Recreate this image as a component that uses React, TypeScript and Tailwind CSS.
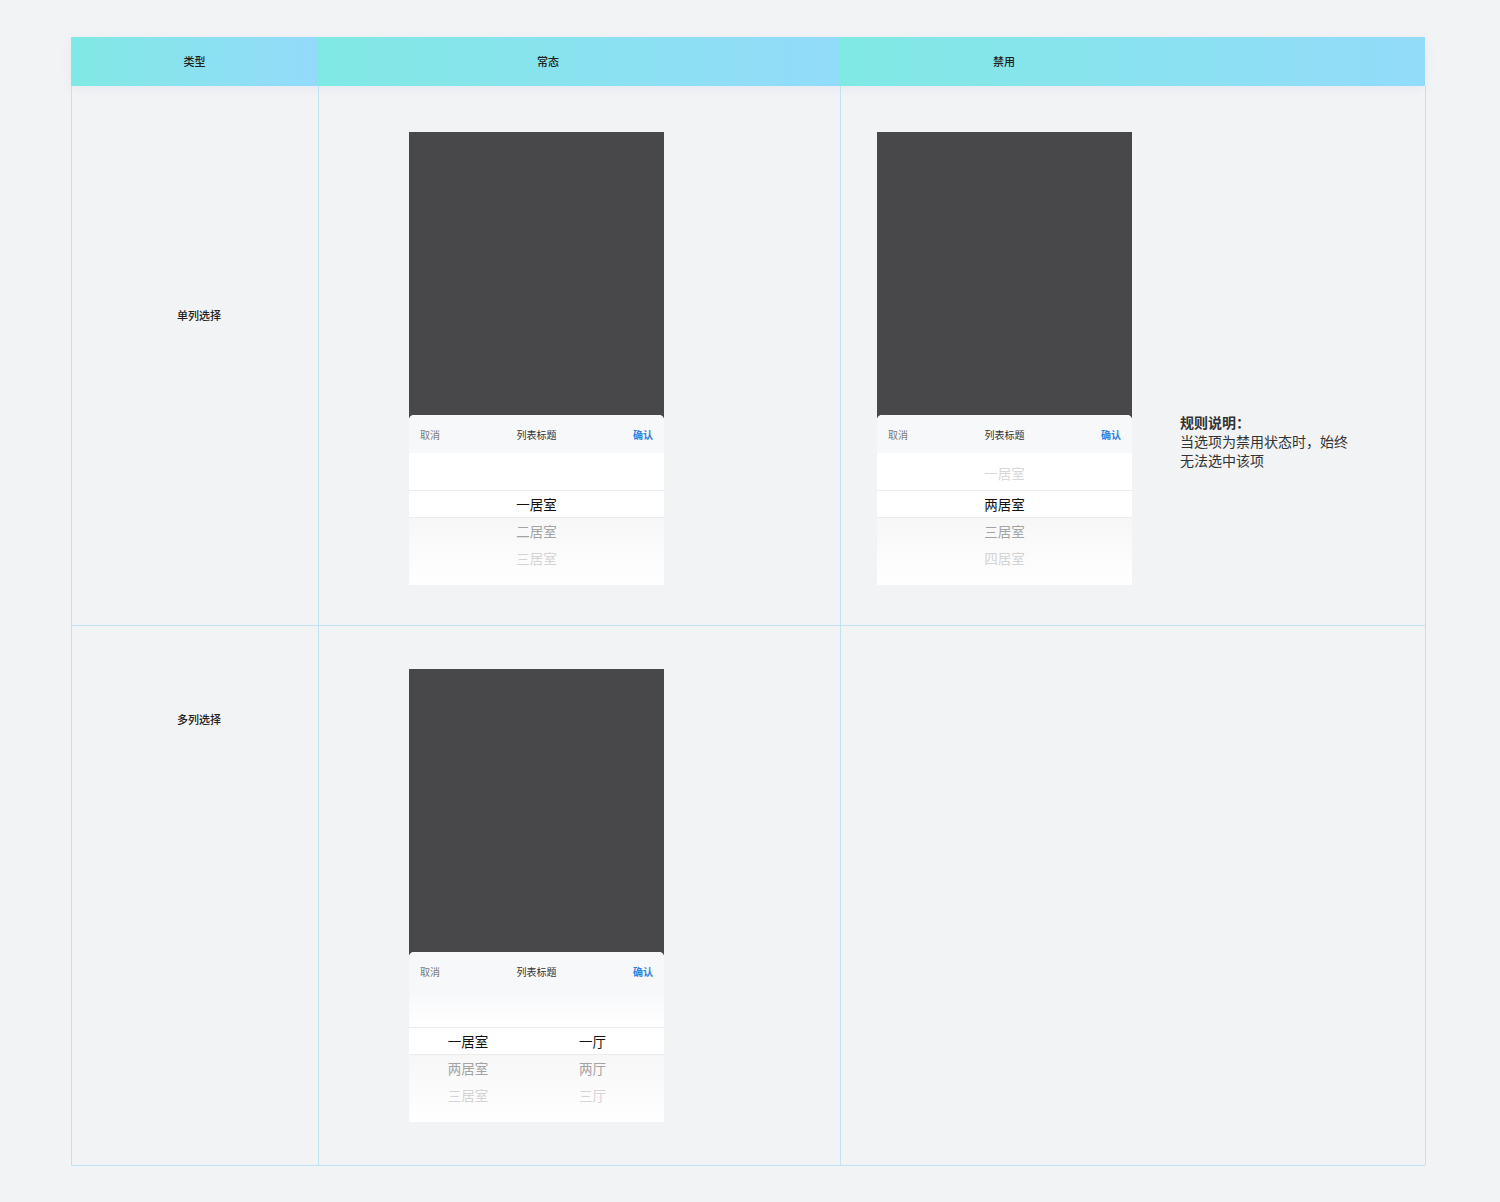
import React from 'react';

const font = "font-['Noto_Sans_CJK_SC','Noto_Sans',sans-serif]";

const Sheet: React.FC<{ children: React.ReactNode }> = ({ children }) => (
  <div className="w-[255px] flex flex-col">
    <div className="h-[288px] bg-[#48484a]" />
    <div className="-mt-[5px] rounded-t-[5px] overflow-hidden bg-white">
      <div className="h-[38px] bg-[#f7f8fa] flex items-center justify-between px-[11px] text-[10px]">
        <span className="text-[#7a7a7a]">取消</span>
        <span className="text-[#333]">列表标题</span>
        <span className="text-[#2f7fe0] font-semibold">确认</span>
      </div>
      {children}
    </div>
  </div>
);

const toneCls = {
  sel: 'text-[#111] text-[13.5px]',
  near: 'text-[#a3a3a3] text-[13.5px]',
  far: 'text-[#d4d4d4] text-[13.5px]',
  off: 'text-[#d8d8d8] text-[13.5px]',
};

const Wheel: React.FC<{ top?: string; sel: string; below: string[] }> = ({ top, sel, below }) => (
  <div className="flex flex-col">
    <div className="h-[37px] pt-[7px] pb-[3px] bg-white flex items-center justify-center">
      {top && <span className={toneCls.off}>{top}</span>}
    </div>
    <div className="h-[28px] flex items-center justify-center border-y border-[#ececec] bg-white">
      <span className={toneCls.sel}>{sel}</span>
    </div>
    <div className="h-[67px] bg-gradient-to-b from-[#f7f7f8] to-white flex flex-col pb-[13px]">
      {below.map((b, i) => (
        <div key={b} className="h-[27px] flex items-center justify-center">
          <span className={i === 0 ? toneCls.near : toneCls.far}>{b}</span>
        </div>
      ))}
    </div>
  </div>
);

const MultiWheel: React.FC = () => {
  const cols = [
    { w: 'w-[118px]', sel: '一居室', below: ['两居室', '三居室'] },
    { w: 'flex-1 pr-[6px]', sel: '一厅', below: ['两厅', '三厅'] },
  ];
  return (
    <div className="flex flex-col">
      <div className="h-[37px] bg-gradient-to-b from-[#f7f8fa] to-white" />
      <div className="h-[28px] flex border-y border-[#ececec] bg-white">
        {cols.map((c) => (
          <div key={c.sel} className={`${c.w} flex items-center justify-center`}>
            <span className={toneCls.sel}>{c.sel}</span>
          </div>
        ))}
      </div>
      <div className="h-[67px] bg-gradient-to-b from-[#f7f7f8] to-white flex pb-[13px]">
        {cols.map((c) => (
          <div key={c.sel} className={`${c.w} flex flex-col`}>
            {c.below.map((b, i) => (
              <div key={b} className="h-[27px] flex items-center justify-center">
                <span className={i === 0 ? toneCls.near : toneCls.far}>{b}</span>
              </div>
            ))}
          </div>
        ))}
      </div>
    </div>
  );
};

const line = 'border-[#bfe2f5]';

const App: React.FC = () => {
  return (
    <div className={`min-h-screen bg-[#f2f3f5] pt-[37px] pl-[71px] ${font}`}>
      <div className="w-[1354px]">
        <div className="grid grid-cols-[247px_522px_585px] h-[49px] shadow-[0_2px_10px_rgba(60,120,160,0.08)] text-[11px] font-medium text-[#222]">
          <div className="bg-gradient-to-r from-[#80e9e4] to-[#93dafa] flex items-center justify-center">类型</div>
          <div className="bg-gradient-to-r from-[#80e9e4] to-[#92dbfa] flex items-center pl-[219px]">常态</div>
          <div className="bg-gradient-to-r from-[#80e9e4] to-[#92dbfa] flex items-center pl-[153px]">禁用</div>
        </div>

        <div className="grid grid-cols-[247px_522px_585px] grid-rows-[540px_539px] border-l border-b border-[#bfe2f5]">
          <div className="border-r border-b border-[#bfe2f5] pl-[105px] pt-[221px] text-[11px] font-medium text-[#222]">
            单列选择
          </div>
          <div className="border-r border-b border-[#bfe2f5] pl-[90px] pt-[46px]">
            <Sheet>
              <Wheel sel="一居室" below={['二居室', '三居室']} />
            </Sheet>
          </div>
          <div className="border-r border-b border-[#bfe2f5] pl-[36px] pt-[46px] flex items-start gap-[48px]">
            <Sheet>
              <Wheel top="一居室" sel="两居室" below={['三居室', '四居室']} />
            </Sheet>
            <div className="mt-[281px] text-[14px] leading-[19px] text-[#333]">
              <div className="font-semibold">规则说明：</div>
              <div>
                当选项为禁用状态时，始终
                <br />
                无法选中该项
              </div>
            </div>
          </div>

          <div className={`border-r ${line} pl-[105px] pt-[85px] text-[11px] font-medium text-[#222]`}>
            多列选择
          </div>
          <div className="border-r border-[#bfe2f5] pl-[90px] pt-[43px]">
            <Sheet>
              <MultiWheel />
            </Sheet>
          </div>
          <div className="border-r border-[#bfe2f5]" />
        </div>
      </div>
    </div>
  );
};

export default App;
